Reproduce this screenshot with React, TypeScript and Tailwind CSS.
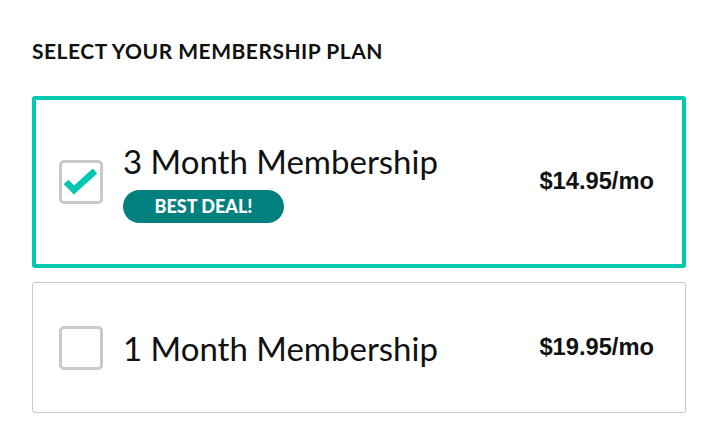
import React from "react";

interface Plan {
  id: string;
  title: string;
  price: string;
  badge?: string;
}

const plans: Plan[] = [
  { id: "3m", title: "3 Month Membership", price: "$14.95/mo", badge: "BEST DEAL!" },
  { id: "1m", title: "1 Month Membership", price: "$19.95/mo" },
];

const CheckBox: React.FC<{ checked: boolean }> = ({ checked }) => (
  <div className="flex h-[44px] w-[44px] shrink-0 items-center justify-center rounded-[5px] border-[3px] border-[#c6c9cd] bg-white">
    {checked && (
      <svg viewBox="0 0 38 38" className="h-[38px] w-[38px]">
        <path
          d="M4 19 L12 27 L33 8"
          fill="none"
          stroke="#00c7b1"
          strokeWidth="6.5"
          strokeLinecap="butt"
          strokeLinejoin="miter"
        />
      </svg>
    )}
  </div>
);

export default function App() {
  const [selected, setSelected] = React.useState("3m");

  return (
    <div className="bg-white px-[32px] pt-[41px] pb-[28px] font-['Lato','Noto_Sans',sans-serif] text-[#111]">
      <h2 className="mb-[35px] text-[21px] font-bold leading-[20px] tracking-[0.5px]">SELECT YOUR MEMBERSHIP PLAN</h2>

      <div className="flex w-[654px] flex-col gap-[14px]">
        {plans.map((plan) => {
          const active = plan.id === selected;
          return (
            <button
              key={plan.id}
              onClick={() => setSelected(plan.id)}
              className={`flex items-center rounded-[3px] bg-white text-left ${
                active ? "h-[172px] border-4 border-[#00c9b2] pl-[23px] pr-[28px]" : "h-[131px] border border-[#c8c8c8] pl-[26px] pr-[31px]"
              }`}
            >
              <CheckBox checked={active} />
              <div className="ml-[20px] flex flex-1 flex-col">
                <span className="text-[33px] leading-[40px]">{plan.title}</span>
                {plan.badge && (
                  <span className="mt-[9px] flex h-[33px] w-[161px] items-center justify-center rounded-full bg-[#00807f] text-[18px] font-black text-white">
                    {plan.badge}
                  </span>
                )}
              </div>
              <span className="font-['Liberation_Sans',Arial,sans-serif] text-[23.7px] font-bold">{plan.price}</span>
            </button>
          );
        })}
      </div>
    </div>
  );
}
